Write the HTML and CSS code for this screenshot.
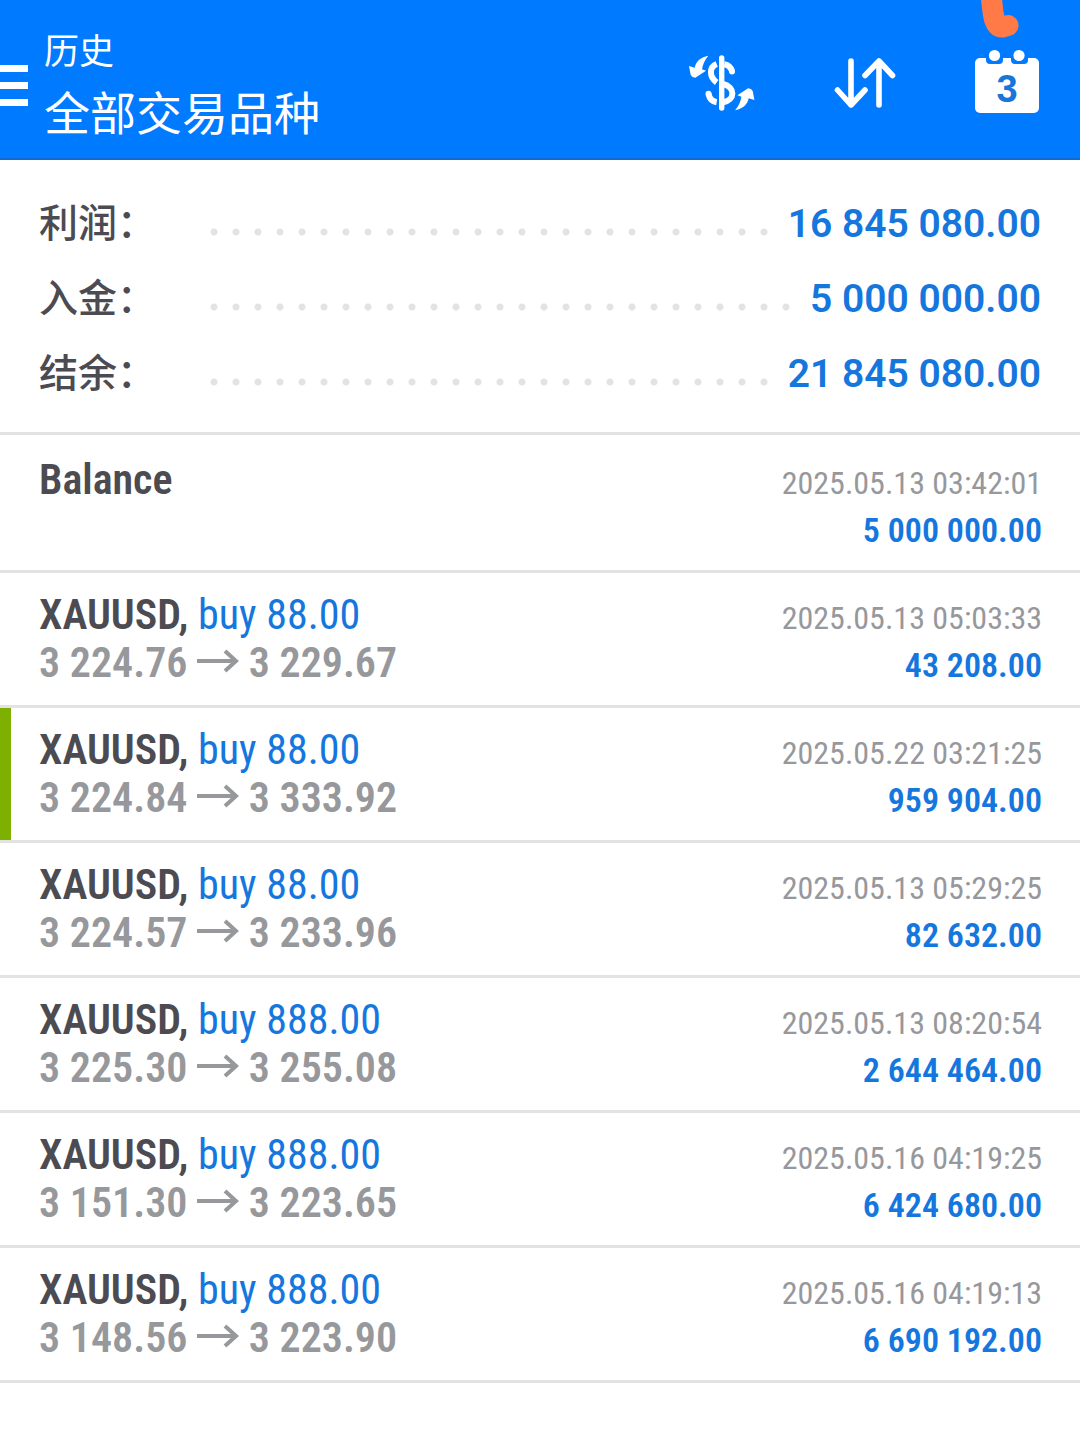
FILE: index.html
```html
<!DOCTYPE html>
<html lang="zh-CN">
<head>
<meta charset="utf-8">
<meta name="viewport" content="width=device-width, initial-scale=1">
<title>历史</title>
<link rel="stylesheet" href="styles.css">
</head>
<body>
<header class="app-bar">
  <button class="menu" type="button" aria-label="菜单"><span></span><span></span><span></span></button>
  <div class="heading">
    <p class="section">历史</p>
    <h1 class="title">全部交易品种</h1>
  </div>
  <div class="actions">
    <button class="action" type="button" aria-label="品种">
      <svg class="icon" viewBox="0 0 72 72">
        <g fill="none" stroke="currentColor" stroke-width="6">
          <path d="M35.7 15V65" stroke-width="5.4" stroke-linecap="round"/>
          <path d="M30.7 21C23 24 23 34 30.7 39.5"/>
          <path d="M38.3 21.2Q44 22 46 28M22.5 51Q24 58 30.7 59.2"/>
          <path d="M37 41C49.500 44 49.500 57 37 59.200"/>
        </g>
        <g fill="currentColor">
          <circle cx="46" cy="28.600" r="3"/>
          <circle cx="22.500" cy="50.800" r="3"/>
          <path id="swap" d="M22.300 12.700C14 14.300 10 18.700 8.700 24.700L3 23L4.700 32Q6 34.700 9.300 34.700L20 27.700L16 26.300C16.700 21.700 18.700 17 22.300 12.700Z"/>
          <use href="#swap" transform="rotate(180 35.700 40)"/>
        </g>
      </svg>
    </button>
    <button class="action" type="button" aria-label="排序">
      <svg class="icon" viewBox="0 0 72 72" fill="none" stroke="currentColor" stroke-width="5.600" stroke-linecap="round" stroke-linejoin="round">
        <path d="M23 18V62M9.500 47L23 62L37 47M51 62V18M37 32.500L51 18L64.500 32.500"/>
      </svg>
    </button>
    <button class="action" type="button" aria-label="日期">
      <svg class="icon" viewBox="0 0 72 72">
        <rect x="5" y="15" width="64" height="55" rx="5" fill="currentColor"/>
        <path class="notch" d="M16 14H33V17Q33 21 29 21H20Q16 21 16 17ZM41 14H58V17Q58 21 54 21H45Q41 21 41 17Z"/>
        <circle cx="24.500" cy="12.500" r="5.600" fill="currentColor"/>
        <circle cx="49" cy="12.500" r="5.600" fill="currentColor"/>
        <text class="day" x="37" y="59" text-anchor="middle">3</text>
      </svg>
    </button>
  </div>
  <svg class="marker" viewBox="0 0 44 40" aria-hidden="true"><path d="M13 -6C15 12 15 28 25 27L30 25.500"/></svg>
</header>
<main>
  <dl class="summary">
    <div class="total"><dt>利润：</dt><dd>16 845 080.00</dd></div>
    <div class="total"><dt>入金：</dt><dd>5 000 000.00</dd></div>
    <div class="total"><dt>结余：</dt><dd>21 845 080.00</dd></div>
  </dl>
  <ul class="deals">
    <li class="deal">
      <div class="line"><b class="symbol">Balance</b><time class="time">2025.05.13 03:42:01</time></div>
      <div class="line"><span class="price">&nbsp;</span><b class="profit">5 000 000.00</b></div>
    </li>
    <li class="deal">
      <div class="line"><b class="symbol">XAUUSD, <span class="side">buy 88.00</span></b><time class="time">2025.05.13 05:03:33</time></div>
      <div class="line"><span class="price">3 224.76 <svg class="arrow" viewBox="0 0 42 24"><path d="M0 12H39M28 2L39 12L28 22"/></svg> 3 229.67</span><b class="profit">43 208.00</b></div>
    </li>
    <li class="deal marked">
      <div class="line"><b class="symbol">XAUUSD, <span class="side">buy 88.00</span></b><time class="time">2025.05.22 03:21:25</time></div>
      <div class="line"><span class="price">3 224.84 <svg class="arrow" viewBox="0 0 42 24"><path d="M0 12H39M28 2L39 12L28 22"/></svg> 3 333.92</span><b class="profit">959 904.00</b></div>
    </li>
    <li class="deal">
      <div class="line"><b class="symbol">XAUUSD, <span class="side">buy 88.00</span></b><time class="time">2025.05.13 05:29:25</time></div>
      <div class="line"><span class="price">3 224.57 <svg class="arrow" viewBox="0 0 42 24"><path d="M0 12H39M28 2L39 12L28 22"/></svg> 3 233.96</span><b class="profit">82 632.00</b></div>
    </li>
    <li class="deal">
      <div class="line"><b class="symbol">XAUUSD, <span class="side">buy 888.00</span></b><time class="time">2025.05.13 08:20:54</time></div>
      <div class="line"><span class="price">3 225.30 <svg class="arrow" viewBox="0 0 42 24"><path d="M0 12H39M28 2L39 12L28 22"/></svg> 3 255.08</span><b class="profit">2 644 464.00</b></div>
    </li>
    <li class="deal">
      <div class="line"><b class="symbol">XAUUSD, <span class="side">buy 888.00</span></b><time class="time">2025.05.16 04:19:25</time></div>
      <div class="line"><span class="price">3 151.30 <svg class="arrow" viewBox="0 0 42 24"><path d="M0 12H39M28 2L39 12L28 22"/></svg> 3 223.65</span><b class="profit">6 424 680.00</b></div>
    </li>
    <li class="deal">
      <div class="line"><b class="symbol">XAUUSD, <span class="side">buy 888.00</span></b><time class="time">2025.05.16 04:19:13</time></div>
      <div class="line"><span class="price">3 148.56 <svg class="arrow" viewBox="0 0 42 24"><path d="M0 12H39M28 2L39 12L28 22"/></svg> 3 223.90</span><b class="profit">6 690 192.00</b></div>
    </li>
  </ul>
</main>
</body>
</html>
```
FILE: styles.css
```css
:root {
  --bar: #007aff;
  --blue: #1577de;
  --dark: #4c4b51;
  --grey: #97989c;
  --line: #e3e3e3;
}

* { box-sizing: border-box; }

body, h1, p, dl, dd, ul { margin: 0; padding: 0; }

body {
  background: #fff;
  color: var(--dark);
  font-family: Roboto, "Noto Sans CJK SC", sans-serif;
}

button {
  padding: 0;
  border: 0;
  background: none;
  color: inherit;
  cursor: pointer;
}

/* App bar */
.app-bar {
  position: relative;
  display: flex;
  align-items: center;
  gap: 16px;
  min-height: 160px;
  padding-right: 38px;
  border-bottom: 2px solid #0f6bd0;
  background: var(--bar);
  color: #fff;
}

.menu {
  display: flex;
  flex-direction: column;
  gap: 10px;
  width: 28px;
  padding-top: 12px;
}

.menu span { height: 7px; width: 100%; background: #fff; }

.heading {
  flex: 1;
  padding-top: 10px;
  font-family: "Noto Sans CJK SC", sans-serif;
}

.section { font-size: 35px; line-height: 52px; }
.title { font-size: 46px; line-height: 70px; font-weight: 400; }

.actions { display: flex; gap: 70px; }
.action, .icon { display: block; width: 72px; height: 72px; }
.notch { fill: var(--bar); }
.day { fill: #1a75d8; font-size: 38px; font-weight: 700; }

.marker {
  position: absolute;
  top: 0;
  right: 58px;
  width: 44px;
  height: 40px;
  fill: none;
  stroke: #ff7a47;
  stroke-width: 21px;
  stroke-linecap: round;
}

/* Account totals */
.summary {
  padding: 25px 39px 22px;
  border-bottom: 3px solid var(--line);
}

.total { display: flex; align-items: center; height: 75px; }

.total dt {
  flex: 0 0 171px;
  padding-bottom: 6px;
  font: 500 39px/58px "Noto Sans CJK SC", sans-serif;
}

/* Dot leader between label and value */
.total::after {
  content: "";
  order: 1;
  flex: 1;
  height: 8px;
  margin: 18px 18px 0 0;
  background: radial-gradient(circle at 4px 4px, var(--line) 3px, transparent 4px) 0 0 / 22px 8px repeat-x;
}

.total dd {
  order: 2;
  padding-top: 2px;
  color: var(--blue);
  font-size: 39px;
  font-weight: 600;
}

/* Deal history */
.deals {
  padding-top: 3px;
  list-style: none;
  font-family: "Roboto Condensed", Roboto, sans-serif;
}

.deal {
  padding: 18px 38px 18px 39px;
  border-bottom: 3px solid var(--line);
}

.marked { box-shadow: inset 11px 0 #7db000; }

.line {
  display: flex;
  align-items: baseline;
  justify-content: space-between;
  height: 48px;
  line-height: 48px;
}

.symbol, .price { font-size: 42px; font-weight: 600; }
.price { color: var(--grey); }
.side { color: var(--blue); font-weight: 400; }
.time, .profit { line-height: 36px; }
.time { color: var(--grey); font-size: 32px; }
.profit { color: var(--blue); font-size: 34px; font-weight: 600; }

.arrow {
  width: 42px;
  height: 24px;
  vertical-align: 4px;
  fill: none;
  stroke: currentColor;
  stroke-width: 4px;
}
```
